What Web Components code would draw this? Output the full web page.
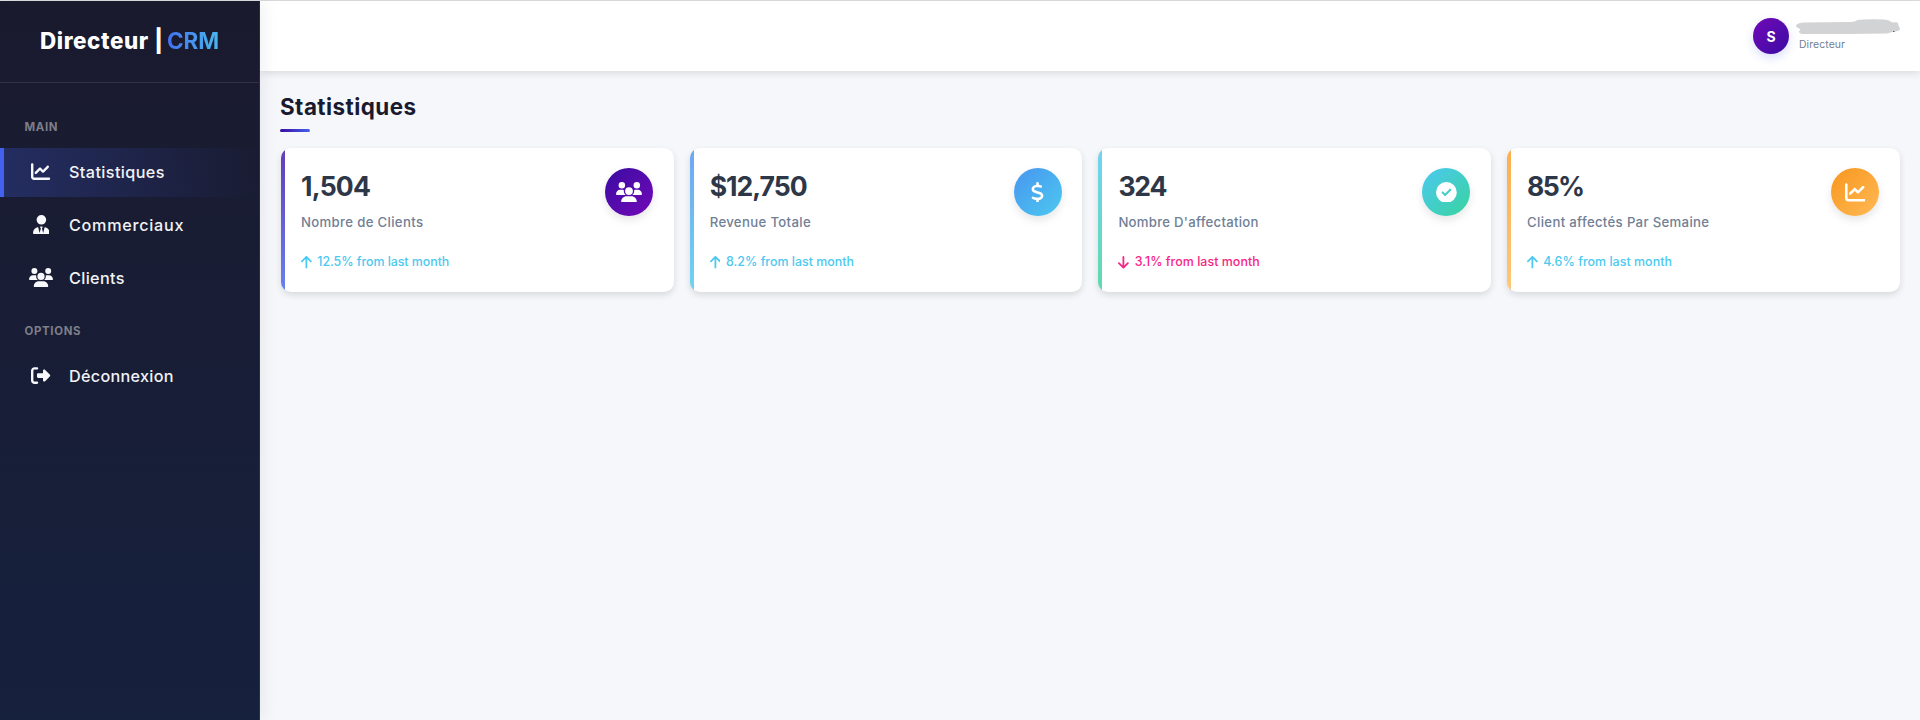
<!DOCTYPE html>
<html lang="fr">
<head>
<meta charset="utf-8">
<title>Directeur | CRM</title>
<style>
html,body{margin:0;height:100%;overflow:hidden}
body{font-family:Inter,"Open Sans",sans-serif;background:#f5f7fb}
</style>
</head>
<body>
<crm-app></crm-app>
<script>
const ICONS = {
  users:[640,'M144 0a80 80 0 1 1 0 160A80 80 0 1 1 144 0zM512 0a80 80 0 1 1 0 160A80 80 0 1 1 512 0zM0 298.7C0 239.8 47.8 192 106.7 192h42.7c15.9 0 31 3.5 44.6 9.7c-1.3 7.2-1.9 14.7-1.9 22.3c0 38.2 16.8 72.5 43.3 96c-.2 0-.4 0-.7 0H21.3C9.6 320 0 310.4 0 298.7zM405.3 320c-.2 0-.4 0-.7 0c26.6-23.5 43.3-57.8 43.3-96c0-7.6-.7-15-1.9-22.3c13.6-6.3 28.7-9.7 44.6-9.7h42.7C592.2 192 640 239.8 640 298.7c0 11.8-9.6 21.3-21.3 21.3H405.3zM224 224a96 96 0 1 1 192 0 96 96 0 1 1 -192 0zM128 485.3C128 411.7 187.7 352 261.3 352H378.7C452.3 352 512 411.7 512 485.3c0 14.7-11.9 26.7-26.7 26.7H154.7c-14.7 0-26.7-11.9-26.7-26.7z'],
  chart:[512,'M64 64c0-17.7-14.3-32-32-32S0 46.3 0 64V400c0 44.2 35.8 80 80 80H480c17.7 0 32-14.3 32-32s-14.3-32-32-32H80c-8.8 0-16-7.2-16-16V64zm406.6 86.6c12.5-12.5 12.5-32.8 0-45.3s-32.8-12.5-45.3 0L320 210.7l-57.4-57.4c-12.5-12.5-32.8-12.5-45.3 0l-112 112c-12.5 12.5-12.5 32.8 0 45.3s32.8 12.5 45.3 0L240 221.3l57.4 57.4c12.5 12.5 32.8 12.5 45.3 0l128-128z'],
  tie:[448,'M224 256A128 128 0 1 0 224 0a128 128 0 1 0 0 256zM209.1 359.2l-18.6-31c-6.4-10.7 1.3-24.2 13.7-24.2H224h19.7c12.4 0 20.1 13.6 13.7 24.2l-18.6 31 33.4 123.9 36-146.9c2-8.1 9.8-13.4 17.9-11.3c70.1 17.6 121.9 81 121.9 156.4c0 17-13.8 30.7-30.7 30.7H285.5c-2.1 0-4-.4-5.8-1.1l.3 1.1H168l.3-1.1c-1.8 .7-3.8 1.1-5.8 1.1H30.7C13.8 512 0 498.2 0 481.3c0-75.5 51.9-138.9 121.9-156.4c8.1-2 15.9 3.3 17.9 11.3l36 146.9 33.4-123.9z'],
  logout:[512,'M377.9 105.9L500.7 228.7c7.2 7.2 11.3 17.1 11.3 27.3s-4.1 20.1-11.3 27.3L377.9 406.1c-6.4 6.4-15 9.9-24 9.9c-18.7 0-33.9-15.2-33.9-33.9l0-62.1-128 0c-17.7 0-32-14.3-32-32l0-64c0-17.7 14.3-32 32-32l128 0 0-62.1c0-18.7 15.2-33.9 33.9-33.9c9 0 17.6 3.6 24 9.9zM160 96L96 96c-17.7 0-32 14.3-32 32l0 256c0 17.7 14.3 32 32 32l64 0c17.7 0 32 14.3 32 32s-14.3 32-32 32l-64 0c-53 0-96-43-96-96L0 128C0 75 43 32 96 32l64 0c17.7 0 32 14.3 32 32s-14.3 32-32 32z'],
  up:[384,'M214.6 41.4c-12.5-12.5-32.8-12.5-45.3 0l-160 160c-12.5 12.5-12.5 32.8 0 45.3s32.8 12.5 45.3 0L160 141.2V448c0 17.7 14.3 32 32 32s32-14.3 32-32V141.2L329.4 246.6c12.5 12.5 32.8 12.5 45.3 0s12.5-32.8 0-45.3l-160-160z'],
  check:[512,'M256 512A256 256 0 1 0 256 0a256 256 0 1 0 0 512zM369 209L241 337c-9.4 9.4-24.6 9.4-33.9 0l-64-64c-9.4-9.4-9.4-24.6 0-33.9s24.6-9.4 33.9 0l47 47L335 175c9.4-9.4 24.6-9.4 33.9 0s9.4 24.6 0 33.9z'],
  dollar:[320,'M160 0c17.7 0 32 14.3 32 32V67.7c1.6 .2 3.1 .4 4.7 .7c.4 .1 .7 .1 1.1 .2l48 8.8c17.4 3.2 28.9 19.9 25.7 37.2s-19.9 28.9-37.2 25.7l-47.5-8.7c-31.3-4.6-58.9-1.5-78.3 6.2s-27.2 18.3-29 28.1c-2 10.7-.5 16.7 1.2 20.4c1.8 3.9 5.5 8.3 12.8 13.2c16.3 10.7 41.3 17.7 73.7 26.3l2.9 .8c28.6 7.6 63.6 16.8 89.6 33.8c14.2 9.3 27.6 21.9 35.9 39.5c8.5 17.9 10.3 37.9 6.4 59.2c-6.9 38-33.1 63.4-65.6 76.7c-13.7 5.6-28.6 9.2-44.4 11V480c0 17.7-14.3 32-32 32s-32-14.3-32-32V445.1c-.4-.1-.9-.1-1.3-.2l-.2 0 0 0c-24.4-3.8-64.5-14.3-91.5-26.3c-16.1-7.2-23.4-26.1-16.2-42.2s26.1-23.4 42.2-16.2c20.9 9.3 55.3 18.5 75.2 21.6c31.9 4.7 58.2 2 76-5.3c16.9-6.9 24.6-16.9 26.8-28.9c1.9-10.6 .4-16.7-1.3-20.4c-1.9-4-5.6-8.4-13-13.3c-16.4-10.7-41.5-17.7-74-26.3l-2.8-.7 0 0C119.4 279.3 84.4 270 58.4 253c-14.2-9.3-27.5-22-35.8-39.6c-8.4-17.9-10.1-37.9-6.1-59.2C23.7 116 52.3 91.2 84.8 78.3c13.3-5.3 27.9-8.9 43.2-11V32c0-17.7 14.3-32 32-32z']
};

class Base extends HTMLElement {
  connectedCallback() {
    if (this.shadowRoot) return;
    this.attachShadow({mode:'open'}).innerHTML = this.render();
    if (this.ready) this.ready();
  }
  a(n, d='') { return this.getAttribute(n) ?? d; }
}

customElements.define('crm-icon', class extends Base {
  render() {
    const name = this.a('name'), down = name === 'down', [w, d] = ICONS[down ? 'up' : name], s = +this.a('size', 16);
    return `<style>:host{display:flex;flex:none}svg{display:block;fill:currentColor}</style>
    <svg width="${w/512*s}" height="${s}" viewBox="0 0 ${w} 512"><path ${down ? 'transform="rotate(180 192 256)"' : ''} d="${d}"/></svg>`;
  }
});

/* A single line of text whose tracking is set so that it fills the width in "w". */
customElements.define('fit-text', class extends Base {
  render() {
    return `<style>:host{display:block;flex:none;white-space:nowrap}span{display:inline-block}</style><span><slot></slot></span>`;
  }
  ready() {
    const w = +this.a('w'), n = this.textContent.length, span = this.shadowRoot.querySelector('span');
    span.style.letterSpacing = '0px';
    const nat = span.getBoundingClientRect().width;
    span.style.letterSpacing = ((w - nat) / (n - 1)).toFixed(3) + 'px';
    this.style.width = w + 'px';
  }
});

customElements.define('nav-item', class extends Base {
  render() {
    return `<style>
    :host{display:flex;align-items:center;box-sizing:border-box;height:49px;margin-bottom:4px;padding-left:25px;border-left:4px solid transparent;color:#f1f2f5;font-size:16.200px;font-weight:500;line-height:24px}
    :host([active]){border-left-color:#4361ee;background:linear-gradient(90deg,rgba(67,97,238,.25),rgba(67,97,238,0)) }
    .i{width:24px;display:flex;justify-content:center;margin:0 16px 2px 0;color:#f8f9fc}
    fit-text{margin-bottom:2px}
    </style><div class="i"><crm-icon name="${this.a('icon')}" size="19.2"></crm-icon></div><fit-text w="${this.a('w')}">${this.a('label')}</fit-text>`;
  }
});

customElements.define('nav-label', class extends Base {
  render() {
    return `<style>:host{display:block;padding-left:24.500px;height:20px;line-height:20px;font-size:11.4px;font-weight:700;color:#7d7e88}</style><fit-text w="${this.a('w')}">${this.a('label')}</fit-text>`;
  }
});

customElements.define('crm-sidebar', class extends Base {
  render() {
    return `<style>
    :host{display:flex;flex-direction:column;box-sizing:border-box;width:260px;flex:none;background:linear-gradient(180deg,#1a1a2e,#16213e);border-right:1px solid rgba(255,255,255,.08);box-shadow:4px 0 15px rgba(0,0,0,.06);z-index:2}
    .logo{display:flex;align-items:center;height:80px;padding:0 0 1px 40px;border-bottom:1px solid rgba(255,255,255,.1);font-size:22.4px;font-weight:800;line-height:30px;color:#fff}
    .crm{margin-left:4px;font-weight:700}
    .crm fit-text{background:linear-gradient(90deg,#4370f0,#49b7ee);-webkit-background-clip:text;background-clip:text;color:transparent}
    nav{display:flex;flex-direction:column;padding-top:34px}
    nav-label{margin-bottom:11px}
    .second{margin:14px 0 11px}
    </style>
    <div class="logo"><fit-text w="123">Directeur |</fit-text><div class="crm"><fit-text w="52">CRM</fit-text></div></div>
    <nav>
      <nav-label label="MAIN" w="33"></nav-label>
      <nav-item active icon="chart" label="Statistiques" w="95.500"></nav-item>
      <nav-item icon="tie" label="Commerciaux" w="114.500"></nav-item>
      <nav-item icon="users" label="Clients" w="55.500"></nav-item>
      <nav-label class="second" label="OPTIONS" w="56"></nav-label>
      <nav-item icon="logout" label="Déconnexion" w="104.500"></nav-item>
    </nav>`;
  }
});

customElements.define('crm-topbar', class extends Base {
  render() {
    return `<style>
    :host{display:flex;justify-content:flex-end;align-items:flex-start;box-sizing:border-box;height:70px;padding:17px 19px 0 0;background:#fff;box-shadow:0 2px 8px rgba(0,0,0,.12)}
    .av{width:36px;height:36px;border-radius:50%;background:linear-gradient(135deg,#7209b7,#3a0ca3);box-shadow:0 4px 10px rgba(67,97,238,.2);display:flex;align-items:center;justify-content:center;color:#fff;font-size:14px;font-weight:700}
    .who{width:105px;margin-left:7px;display:flex;flex-direction:column}
    svg{display:block}
    .role{margin:3px 0 0 3px;font-size:10.4px;line-height:14px;color:#718096}
    </style>
    <div class="av">S</div>
    <div class="who"><svg width="105" height="17" viewBox="0 0 105 17"><path fill="#d2d3d5" d="M2 6Q3 4 10 4.500L52 4Q60 4 61 2Q70 1 88 1.500Q94 2 96 4.500Q103 3.500 102 6L104 11Q104 13 98 13.500L91 15.500L50 16L6 16Q2 15 3 13Q5 12 4 11Q-1 9 0 7Z"/><path fill="#555b68" d="M97 13h1.500v1H97z"/></svg>
    <div class="role"><fit-text w="46">Directeur</fit-text></div></div>`;
  }
});

customElements.define('stat-card', class extends Base {
  render() {
    const down = this.hasAttribute('down');
    return `<style>
    :host{display:flex;justify-content:space-between;align-items:flex-start;box-sizing:border-box;height:144px;background:linear-gradient(180deg,var(--b1),var(--b2)) 0 0/4px 100% no-repeat #fff;border-radius:10px;box-shadow:0 3px 7px rgba(0,0,0,.12);padding:20px 20.750px 0 20px}
    .v{padding-bottom:1px;font-size:26.600px;font-weight:700;line-height:36px;color:#2d3748}
    .l{margin-top:6px;font-size:13.200px;font-weight:500;line-height:22px;color:#718096}
    .t{margin-top:18px;display:flex;align-items:center;height:22px;font-size:12.400px;font-weight:500;line-height:22px;color:${down ? '#f72585' : '#4cc9f0'}}
    .t fit-text{margin-left:5.500px}
    .c{width:48px;height:48px;border-radius:50%;display:flex;align-items:center;justify-content:center;color:#fff;background:linear-gradient(135deg,var(--c1),var(--c2));box-shadow:0 4px 8px rgba(0,0,0,.1)}
    </style>
    <div><div class="v"><fit-text w="${this.a('vw')}">${this.a('value')}</fit-text></div>
    <div class="l"><fit-text w="${this.a('lw')}">${this.a('label')}</fit-text></div>
    <div class="t"><crm-icon name="${down ? 'down' : 'up'}" size="14.4"></crm-icon><fit-text w="${this.a('tw')}">${this.a('trend')}</fit-text></div></div>
    <div class="c"><crm-icon name="${this.a('icon')}" size="20.8"></crm-icon></div>`;
  }
});

customElements.define('crm-app', class extends Base {
  render() {
    return `<style>
    :host{display:flex;box-sizing:border-box;width:100%;height:100vh;border-top:1px solid #dedfe0}
    main{flex:1;min-width:0}
    .page{padding:20px 20.250px 0 20px}
    .title{font-size:22.400px;font-weight:700;line-height:32px;color:#1a1a2e}
    .rule{width:30px;height:3px;border-radius:2px;background:linear-gradient(90deg,#3a0ca3,#4361ee);margin:6px 0 16px}
    .grid{display:grid;grid-template-columns:repeat(4,1fr);gap:16px;margin-left:1px}
    </style>
    <crm-sidebar></crm-sidebar>
    <main><crm-topbar></crm-topbar>
      <div class="page"><div class="title"><fit-text w="136">Statistiques</fit-text></div><div class="rule"></div>
      <div class="grid">
        <stat-card style="--b1:#613db5;--b2:#6981f1;--c1:#3a0ca3;--c2:#7209b7" value="1,504" vw="70" label="Nombre de Clients" lw="122" trend="12.5% from last month" tw="132" icon="users"></stat-card>
        <stat-card style="--b1:#6da7f2;--b2:#70d4f3;--c1:#4895ef;--c2:#4cc9f0" value="$12,750" vw="98" label="Revenue Totale" lw="101" trend="8.2% from last month" tw="128" icon="dollar"></stat-card>
        <stat-card down style="--b1:#70d4f3;--b2:#5fdbac;--c1:#4cc9f0;--c2:#38d39f" value="324" vw="49" label="Nombre D'affectation" lw="140" trend="3.1% from last month" tw="125" icon="check"></stat-card>
        <stat-card style="--b1:#fbae4f;--b2:#ffc877;--c1:#f8961e;--c2:#ffba55" value="85%" vw="58" label="Client affectés Par Semaine" lw="182" trend="4.6% from last month" tw="128.500" icon="chart"></stat-card>
      </div></div>
    </main>`;
  }
});
</script>
</body>
</html>
